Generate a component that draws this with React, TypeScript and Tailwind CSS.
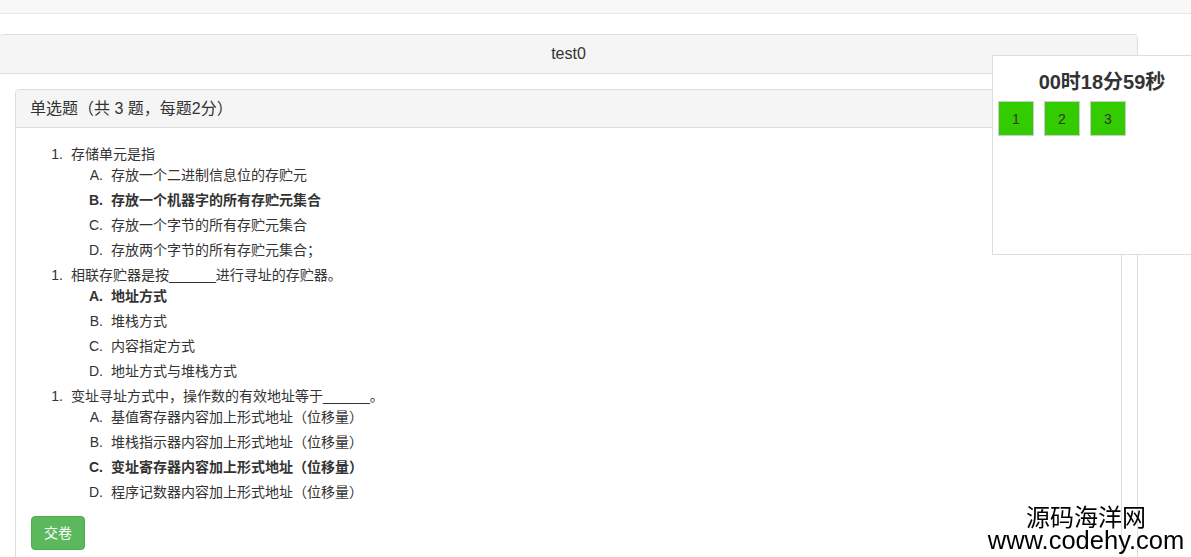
import React from "react";

const questions = [
  {
    title: "存储单元是指",
    options: [
      { text: "存放一个二进制信息位的存贮元", on: false },
      { text: "存放一个机器字的所有存贮元集合", on: true },
      { text: "存放一个字节的所有存贮元集合", on: false },
      { text: "存放两个字节的所有存贮元集合；", on: false },
    ],
  },
  {
    title: "相联存贮器是按______进行寻址的存贮器。",
    options: [
      { text: "地址方式", on: true },
      { text: "堆栈方式", on: false },
      { text: "内容指定方式", on: false },
      { text: "地址方式与堆栈方式", on: false },
    ],
  },
  {
    title: "变址寻址方式中，操作数的有效地址等于______。",
    options: [
      { text: "基值寄存器内容加上形式地址（位移量）", on: false },
      { text: "堆栈指示器内容加上形式地址（位移量）", on: false },
      { text: "变址寄存器内容加上形式地址（位移量）", on: true },
      { text: "程序记数器内容加上形式地址（位移量）", on: false },
    ],
  },
];

const letters = ["A", "B", "C", "D"];

const App = () => {
  return (
    <div className="min-h-screen bg-white text-[#333] text-[14px] leading-[20px] font-['Liberation_Sans','Noto_Sans_CJK_SC',sans-serif]">
      {/* top nav remnant */}
      <div className="h-[14px] bg-[#f8f8f8] border-b border-[#e7e7e7]" />

      {/* paper panel */}
      <div className="mt-[20px] ml-[-1px] w-[1139px] border border-[#ddd] rounded-[4px]">
        <div className="bg-[#f5f5f5] border-b border-[#ddd] px-[15px] py-[10px] text-center text-[16px] leading-[17.6px] rounded-t-[3px]">
          test0
        </div>
        <div className="p-[15px]">
          <div className="border border-[#ddd] rounded-[4px]">
            <div className="bg-[#f5f5f5] border-b border-[#ddd] pl-[14px] pr-[15px] py-[10px] text-[16px] leading-[17.6px] rounded-t-[3px]">
              单选题（共 3 题，每题2分）
            </div>
            <div className="px-[15px] pt-[16px] pb-[15px]">
              {questions.map((q, i) => (
                <div key={i} className="flex">
                  <span className="w-[40px] shrink-0 text-right pr-[8px]">1.</span>
                  <div>
                    <div className="mb-px">{q.title}</div>
                    {q.options.map((o, j) => (
                      <div key={j} className={o.on ? "flex mb-[5px] font-bold" : "flex mb-[5px]"}>
                        <span className="w-[40px] shrink-0 text-right pr-[8px]">{letters[j]}.</span>
                        <span>{o.text}</span>
                      </div>
                    ))}
                  </div>
                </div>
              ))}
              <button className="mt-[9px] px-[12px] py-[6px] bg-[#5cb85c] border border-[#4cae4c] rounded-[4px] text-white">
                交卷
              </button>
            </div>
          </div>
        </div>
      </div>

      {/* timer box */}
      <div className="fixed left-[992px] top-[55px] w-[220px] h-[200px] bg-white border border-[#ddd]">
        <h3 className="mt-[15px] text-center text-[20px] leading-[22px] font-bold">00时18分59秒</h3>
        <div className="mt-[8px] pl-[5px] flex gap-[10px]">
          {[1, 2, 3].map((n) => (
            <div
              key={n}
              className="w-[36px] h-[35px] bg-[#33cc00] border border-[#ccc] flex items-center justify-center"
            >
              {n}
            </div>
          ))}
        </div>
      </div>

      {/* watermark */}
      <div className="fixed left-[984px] top-[503px] w-[204px] text-center text-black leading-[25px]">
        <div className="text-[24px] font-['Noto_Sans_CJK_SC',sans-serif]">源码海洋网</div>
        <div className="text-[25.5px] font-['Liberation_Sans',sans-serif]">www.codehy.com</div>
      </div>
    </div>
  );
};

export default App;
